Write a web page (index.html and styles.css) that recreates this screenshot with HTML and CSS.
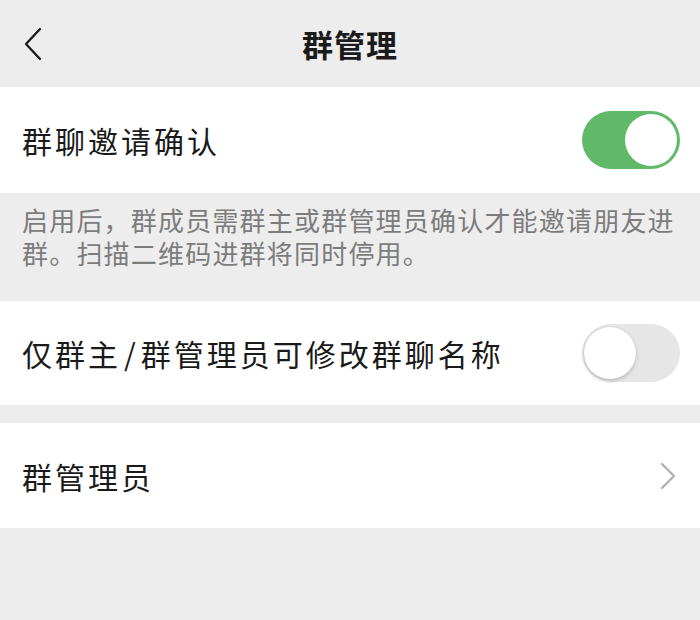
FILE: index.html
```html
<!DOCTYPE html>
<html lang="zh">
<head>
<meta charset="utf-8">
<link rel="stylesheet" href="styles.css">
</head>
<body>
<div class="page">
  <header class="nav">
    <svg class="back" width="22" height="34" viewBox="0 0 22 34"><path d="M18 2 L4 17 L18 32" fill="none" stroke="#1a1a1a" stroke-width="2.3" stroke-linecap="round" stroke-linejoin="round"/></svg>
    <div class="title">群管理</div>
  </header>
  <div class="row r1">
    <span class="label">群聊邀请确认</span>
    <span class="switch on"><span class="knob"></span></span>
  </div>
  <div class="desc">启用后，群成员需群主或群管理员确认才能邀请朋友进群。扫描二维码进群将同时停用。</div>
  <div class="row r2">
    <span class="label">仅群主<span class="slash">/</span>群管理员可修改群聊名称</span>
    <span class="switch off"><span class="knob"></span></span>
  </div>
  <div class="gap"></div>
  <div class="row r3">
    <span class="label">群管理员</span>
    <svg class="chev" width="16" height="28" viewBox="0 0 16 28"><path d="M2 2 L14 14 L2 26" fill="none" stroke="#b2b2b2" stroke-width="2.4" stroke-linecap="round" stroke-linejoin="round"/></svg>
  </div>
</div>
</body>
</html>
```

FILE: styles.css
```css
html, body {
  margin: 0;
  padding: 0;
  background: #ededed;
}
.page {
  width: 700px;
  height: 620px;
  background: #ededed;
  font-family: "Noto Sans CJK SC", "Noto Sans", sans-serif;
  color: #1a1a1a;
}
.nav {
  height: 87px;
  position: relative;
  display: flex;
  align-items: center;
  justify-content: center;
}
.back {
  position: absolute;
  left: 22px;
  top: 27px;
}
.title {
  font-size: 31px;
  font-weight: 700;
  letter-spacing: 1px;
  color: #1a1a1a;
}
.row {
  background: #fff;
  display: flex;
  align-items: center;
  justify-content: space-between;
  padding: 0 20px 0 22px;
}
.r1 { height: 106px; }
.r2 { height: 104px; }
.r3 { height: 105px; padding-right: 24px; }
.label {
  font-size: 30px;
  letter-spacing: 3px;
  line-height: 1;
}
.slash {
  margin: 0 2px 0 3px;
}
.desc {
  height: 108px;
  box-sizing: border-box;
  padding: 10px 20px 0 22px;
  font-size: 26px;
  line-height: 33px;
  letter-spacing: 1.2px;
  color: #7c7c7c;
}
.gap { height: 18px; }
.switch {
  width: 98px;
  height: 58px;
  border-radius: 29px;
  box-sizing: border-box;
  position: relative;
  display: block;
}
.switch.on {
  background: #5fb968;
}
.switch.off {
  background: #e6e6e6;
}
.knob {
  position: absolute;
  top: 3px;
  width: 52px;
  height: 52px;
  border-radius: 50%;
  background: #fff;
}
.switch.on .knob { right: 3px; }
.switch.off .knob {
  left: 2px;
  box-shadow: 0 2px 4px rgba(0,0,0,0.18), 0 0 1px rgba(0,0,0,0.15);
}
```
